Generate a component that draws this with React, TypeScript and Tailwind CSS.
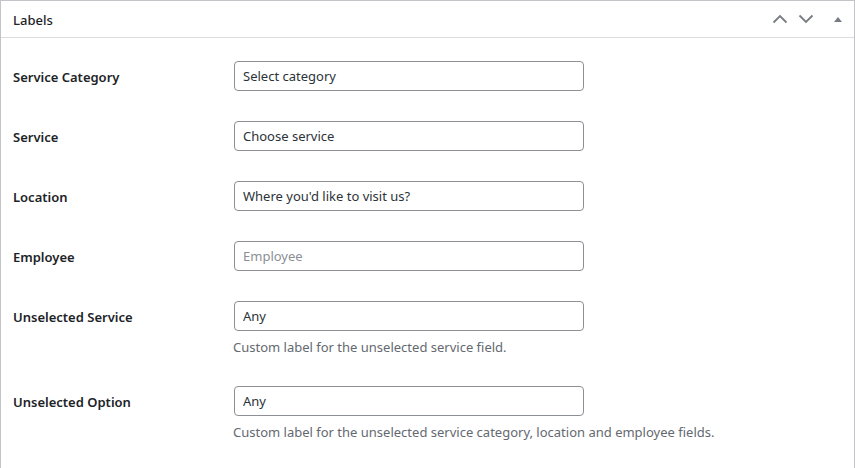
const rows: {
  label: string;
  value?: string;
  placeholder?: string;
  help?: string;
}[] = [
  { label: "Service Category", value: "Select category" },
  { label: "Service", value: "Choose service" },
  { label: "Location", value: "Where you'd like to visit us?" },
  { label: "Employee", placeholder: "Employee" },
  {
    label: "Unselected Service",
    value: "Any",
    help: "Custom label for the unselected service field.",
  },
  {
    label: "Unselected Option",
    value: "Any",
    help: "Custom label for the unselected service category, location and employee fields.",
  },
];

function Chevron({ up }: { up?: boolean }) {
  return (
    <svg width="16" height="16" viewBox="0 0 16 16" className="text-[#787c82]">
      <polyline
        points={up ? "1.5,11.5 8,5 14.5,11.5" : "1.5,4.5 8,11 14.5,4.5"}
        fill="none"
        stroke="currentColor"
        strokeWidth="1.8"
      />
    </svg>
  );
}

export default function App() {
  return (
    <div className="min-h-[468px] bg-white font-['Noto_Sans','Open_Sans',sans-serif] text-[13px] text-[#1d2327]">
      <div className="border border-[#c3c4c7] bg-white">
        <div className="flex h-[37px] items-center justify-between border-b border-[#dcdcde] pl-3 pr-2">
          <h2 className="pt-1 text-[13px] font-medium">Labels</h2>
          <div className="flex items-center gap-[10px]">
            <Chevron up />
            <Chevron />
            <svg width="16" height="16" viewBox="0 0 16 16" className="ml-[6px] text-[#787c82]">
              <polygon points="4,11 8,6 12,11" fill="currentColor" />
            </svg>
          </div>
        </div>

        <div className="px-3 pt-[23px]">
          {rows.map((r) => (
            <div key={r.label} className={`flex ${r.help ? "h-[85px]" : "h-[60px]"}`}>
              <div className="w-[221px] shrink-0 pt-[7px] text-[13px] font-semibold">
                {r.label}
              </div>
              <div>
                <input
                  readOnly
                  defaultValue={r.value}
                  placeholder={r.placeholder}
                  className="h-[30px] w-[350px] rounded-[4px] border border-[#8c8f94] px-2 text-[13px] text-[#2c3338] placeholder:text-[#8c8f94] outline-none"
                />
                {r.help && (
                  <p className="-ml-px mt-[7px] text-[13px] text-[#646970]">{r.help}</p>
                )}
              </div>
            </div>
          ))}
        </div>
      </div>
    </div>
  );
}
